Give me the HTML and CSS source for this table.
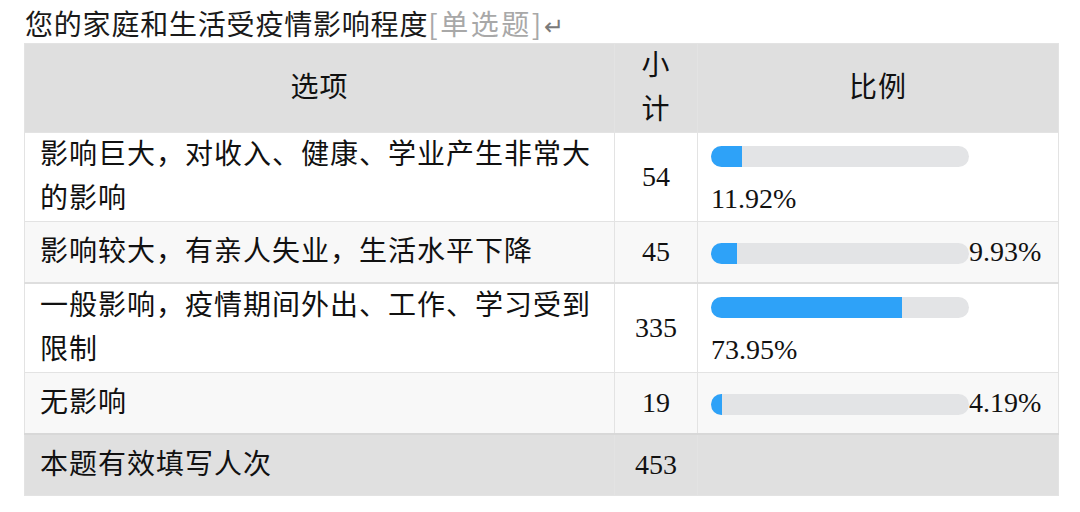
FILE: index.html
```html
<!DOCTYPE html>
<html lang="zh-CN">
<head>
<meta charset="utf-8">
<title>您的家庭和生活受疫情影响程度</title>
<link rel="stylesheet" href="styles.css">
</head>
<body>
<h1 class="title">您的家庭和生活受疫情影响程度<span class="type">[单选题]</span><span class="mark">↵</span></h1>
<table class="result">
  <colgroup>
    <col class="col-opt">
    <col class="col-num">
    <col class="col-pct">
  </colgroup>
  <thead>
    <tr class="head-row">
      <th class="h-opt">选项</th>
      <th class="h-num">小计</th>
      <th class="h-pct">比例</th>
    </tr>
  </thead>
  <tbody>
    <tr class="row">
      <td class="opt">影响巨大，对收入、健康、学业产生非常大的影响</td>
      <td class="num">54</td>
      <td class="pct"><span class="bar"><span class="fill" style="width:11.92%"></span></span>11.92%</td>
    </tr>
    <tr class="row alt sep">
      <td class="opt">影响较大，有亲人失业，生活水平下降</td>
      <td class="num">45</td>
      <td class="pct"><span class="bar"><span class="fill" style="width:9.93%"></span></span>9.93%</td>
    </tr>
    <tr class="row">
      <td class="opt">一般影响，疫情期间外出、工作、学习受到限制</td>
      <td class="num">335</td>
      <td class="pct"><span class="bar"><span class="fill" style="width:73.95%"></span></span>73.95%</td>
    </tr>
    <tr class="row alt">
      <td class="opt">无影响</td>
      <td class="num">19</td>
      <td class="pct"><span class="bar"><span class="fill" style="width:4.19%"></span></span>4.19%</td>
    </tr>
  </tbody>
  <tfoot>
    <tr class="foot-row">
      <td class="opt">本题有效填写人次</td>
      <td class="num">453</td>
      <td class="pct"></td>
    </tr>
  </tfoot>
</table>
</body>
</html>
```
FILE: styles.css
```css
html, body {
  margin: 0;
  padding: 0;
  background: #ffffff;
}

body {
  padding: 0 0 0 24px;
  font-family: "Liberation Serif", "Noto Sans CJK SC", serif;
  color: #111111;
}

.title {
  margin: 0;
  padding: 3px 0 0 1px;
  height: 40px;
  line-height: 40px;
  font-family: "Noto Sans CJK SC", sans-serif;
  font-weight: 400;
  font-size: 28px;
  letter-spacing: 0.8px;
  color: #1a1a1a;
}

.title .type {
  color: #a8a8a8;
  letter-spacing: 2.5px;
}

.title .mark {
  font-family: "DejaVu Sans", sans-serif;
  font-size: 24px;
  color: #7a7a7a;
  margin-left: 0;
}

.result {
  border-collapse: collapse;
  table-layout: fixed;
  width: 1034px;
  font-size: 28px;
  line-height: 44px;
  letter-spacing: 1px;
}

.col-opt { width: 590px; }
.col-num { width: 83px; }
.col-pct { width: 361px; }

.result th,
.result td {
  border: 1px solid #e3e3e3;
  padding: 0 13px;
  vertical-align: middle;
}

.result th {
  font-weight: 400;
  text-align: center;
  background: #dfdfdf;
}

.head-row th {
  height: 88px;
}

.row td {
  height: 60px;
  background: #ffffff;
}

.row.alt td {
  background: #f8f8f8;
}

.row.sep td {
  border-bottom: 2px solid #dedede;
}

.result td.opt {
  padding-left: 15px;
  text-align: left;
}

.result td.num {
  text-align: center;
  letter-spacing: 0;
}

.result td.pct {
  letter-spacing: 0;
  padding-right: 10px;
}

.bar {
  display: inline-block;
  vertical-align: middle;
  width: 258px;
  height: 21px;
  border-radius: 11px;
  background: #e3e4e6;
  overflow: hidden;
  margin-top: -2px;
}

.fill {
  display: block;
  height: 100%;
  background: #2ea2f8;
}

.foot-row td {
  height: 60px;
  background: #e0e0e0;
  border-top: 2px solid #d8d8d8;
}
```
